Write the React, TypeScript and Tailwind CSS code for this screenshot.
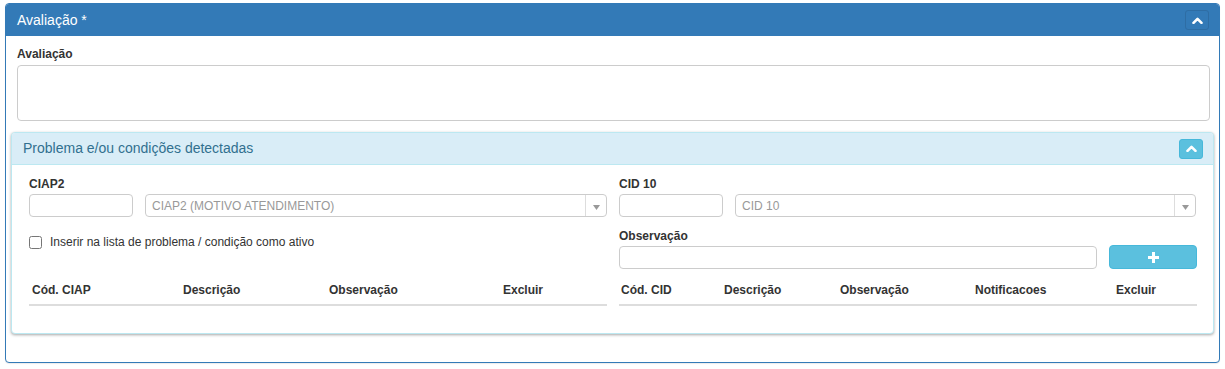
import React from "react";

const font = { fontFamily: '"Liberation Sans", Arial, sans-serif' };

function Chevron() {
  return (
    <svg width="11" height="7" viewBox="0 0 11 7">
      <polyline points="1.5,5.8 5.5,1.8 9.5,5.8" fill="none" stroke="#fff" strokeWidth="2.6" strokeLinecap="round" strokeLinejoin="round" />
    </svg>
  );
}

function Select({ placeholder }: { placeholder: string }) {
  return (
    <div className="flex-1 h-[23px] border border-[#ccc] rounded-[4px] flex items-stretch bg-white">
      <div className="flex-1 flex items-center pl-[6px] text-[12px] text-[#999] leading-none">{placeholder}</div>
      <div className="w-[21px] border-l border-[#ddd] flex items-center justify-center pt-[3px]">
        <svg width="7" height="5" viewBox="0 0 7 5">
          <polygon points="0,0 7,0 3.5,5" fill="#999" />
        </svg>
      </div>
    </div>
  );
}

export default function App() {
  return (
    <div className="bg-white w-[1225px] h-[369px] pt-[3px] pl-[5px]" style={font}>
      <div className="w-[1215px] border border-[#337ab7] rounded-[4px] shadow-[0_1px_1px_rgba(0,0,0,0.08)] bg-white overflow-hidden">
        <div className="h-[32px] bg-[#337ab7] flex items-center justify-between pl-[11px] pr-[10px]">
          <span className="text-white text-[14px]">Avaliação *</span>
          <button className="w-[24px] h-[20px] rounded-[3px] border border-[#2e6da4] bg-[#337ab7] flex items-center justify-center">
            <Chevron />
          </button>
        </div>
        <div className="pt-[10px] px-[5px] pb-[28px]">
          <div className="ml-[6px] mr-[4px]">
            <div className="text-[12px] font-bold text-[#333] leading-[17px] mb-[2px]">Avaliação</div>
            <div className="h-[56px] border border-[#ccc] rounded-[4px] bg-white" />
          </div>
          <div className="mt-[11px] border border-[#bce8f1] rounded-[4px] shadow-[0_1px_3px_rgba(0,0,0,0.35)] bg-white overflow-hidden">
            <div className="h-[32px] bg-[#d9edf7] border-b border-[#bce8f1] flex items-center justify-between pl-[11px] pr-[10px]">
              <span className="text-[#31708f] text-[14px]">Problema e/ou condições detectadas</span>
              <button className="w-[24px] h-[20px] rounded-[3px] border border-[#46b8da] bg-[#5bc0de] flex items-center justify-center">
                <Chevron />
              </button>
            </div>
            <div className="pt-[11px] pl-[17px] pb-[27px] text-[#333]">
              {/* Row 1 */}
              <div className="grid grid-cols-[578px_578px] gap-x-[12px]">
                <div>
                  <div className="text-[12px] font-bold leading-[17px] mb-[1px]">CIAP2</div>
                  <div className="flex gap-[12px]">
                    <div className="w-[104px] h-[23px] border border-[#ccc] rounded-[4px]" />
                    <Select placeholder="CIAP2 (MOTIVO ATENDIMENTO)" />
                  </div>
                </div>
                <div>
                  <div className="text-[12px] font-bold leading-[17px] mb-[1px]">CID 10</div>
                  <div className="flex gap-[12px] pr-[1px]">
                    <div className="w-[104px] h-[23px] border border-[#ccc] rounded-[4px]" />
                    <Select placeholder="CID 10" />
                  </div>
                </div>
              </div>
              {/* Row 2 */}
              <div className="grid grid-cols-[578px_578px] gap-x-[12px] mt-[11px] items-start">
                <div className="pt-[6px] flex items-center">
                  <input type="checkbox" className="m-0 w-[13px] h-[13px]" />
                  <span className="ml-[8px] text-[12px] leading-[17px]">Inserir na lista de problema / condição como ativo</span>
                </div>
                <div>
                  <div className="text-[12px] font-bold leading-[17px]">Observação</div>
                  <div className="flex items-end gap-[12px]">
                    <div className="w-[478px] h-[23px] border border-[#ccc] rounded-[4px]" />
                    <button className="flex-1 h-[24px] rounded-[4px] bg-[#5bc0de] border border-[#46b8da] flex items-center justify-center">
                      <svg width="11" height="11" viewBox="0 0 11 11">
                        <rect x="4" y="0" width="3" height="11" fill="#fff" />
                        <rect x="0" y="4" width="11" height="3" fill="#fff" />
                      </svg>
                    </button>
                  </div>
                </div>
              </div>
              {/* Row 3 tables */}
              <div className="grid grid-cols-[578px_578px] gap-x-[12px] mt-[7px]">
                <div className="grid grid-cols-[151px_146px_174px_1fr] border-b-2 border-[#ddd] text-[12px] font-bold leading-[17px]">
                  <div className="pl-[3px] pt-[6px] pb-[5px]">Cód. CIAP</div>
                  <div className="pl-[3px] pt-[6px] pb-[5px]">Descrição</div>
                  <div className="pl-[3px] pt-[6px] pb-[5px]">Observação</div>
                  <div className="pl-[3px] pt-[6px] pb-[5px]">Excluir</div>
                </div>
                <div className="grid grid-cols-[102px_116px_135px_141px_1fr] border-b-2 border-[#ddd] text-[12px] font-bold leading-[17px]">
                  <div className="pl-[2px] pt-[6px] pb-[5px]">Cód. CID</div>
                  <div className="pl-[3px] pt-[6px] pb-[5px]">Descrição</div>
                  <div className="pl-[3px] pt-[6px] pb-[5px]">Observação</div>
                  <div className="pl-[3px] pt-[6px] pb-[5px]">Notificacoes</div>
                  <div className="pl-[3px] pt-[6px] pb-[5px]">Excluir</div>
                </div>
              </div>
            </div>
          </div>
        </div>
      </div>
    </div>
  );
}
